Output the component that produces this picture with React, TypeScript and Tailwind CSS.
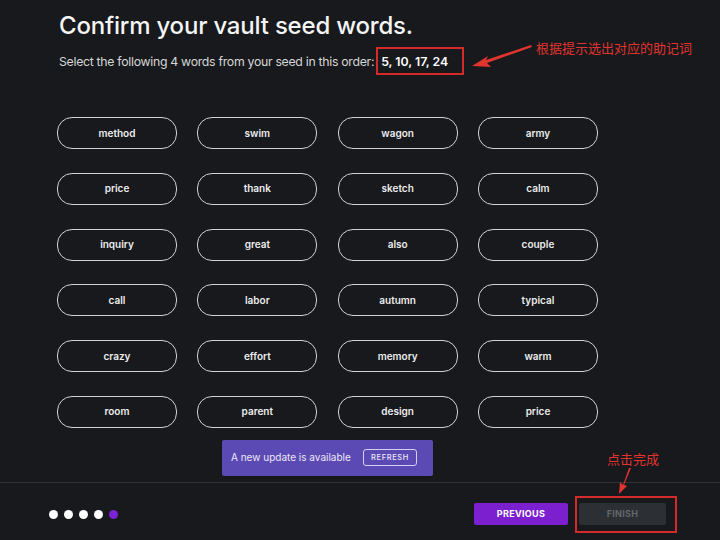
const words = [
  'method', 'swim', 'wagon', 'army',
  'price', 'thank', 'sketch', 'calm',
  'inquiry', 'great', 'also', 'couple',
  'call', 'labor', 'autumn', 'typical',
  'crazy', 'effort', 'memory', 'warm',
  'room', 'parent', 'design', 'price',
];

export default function App() {
  return (
    <div className="relative h-[540px] w-[720px] overflow-hidden bg-[#17191c] font-['Inter',sans-serif] text-white">
      {/* Main */}
      <div className="h-[482px] pl-[57px] pt-[10px]">
        <h1 className="pl-[2px] text-[24px] font-medium leading-[32px] tracking-[-0.2px] text-[#f4f4f4]">
          Confirm your vault seed words.
        </h1>
        <p className="mt-[6px] flex items-center pl-[2px] text-[12.3px] leading-[28px] text-[#d6d6d6] tracking-[-0.3px]">
          Select the following 4 words from your seed in this order:
          <span className="ml-[7px] font-semibold text-white tracking-[0px]">5, 10, 17, 24</span>
        </p>

        <div className="mt-[41px] grid w-[541px] grid-cols-4 gap-x-[20.3px] gap-y-[23.8px]">
          {words.map((w, i) => (
            <div
              key={i}
              className="flex h-[32px] w-[120px] items-center justify-center rounded-[15px] border-[1.5px] border-[#d2d2d2] text-[10px] font-semibold text-[#ececec]"
            >
              {w}
            </div>
          ))}
        </div>

        <div className="mt-[12px] flex w-[541px] justify-center">
          <div className="flex h-[36px] w-[211px] items-center justify-between rounded-[2px] bg-[#5b4ab3] pl-[9px] pr-[16px] shadow">
            <span className="text-[10px] text-[#ebe8f7]">A new update is available</span>
            <span className="flex h-[17px] w-[54px] items-center justify-center rounded-[3px] border border-[#d6d0f0] text-[7.5px] font-medium tracking-[0.6px] text-[#ebe8f7]">
              REFRESH
            </span>
          </div>
        </div>
      </div>

      {/* Footer */}
      <div className="flex h-[58px] items-start justify-between border-t border-[#303235] pl-[49px] pr-[54px] pt-[20px]">
        <div className="mt-[7px] flex gap-[6px]">
          <span className="h-[9px] w-[9px] rounded-full bg-white" />
          <span className="h-[9px] w-[9px] rounded-full bg-white" />
          <span className="h-[9px] w-[9px] rounded-full bg-white" />
          <span className="h-[9px] w-[9px] rounded-full bg-white" />
          <span className="h-[9px] w-[9px] rounded-full bg-[#7b22d4]" />
        </div>
        <div className="flex gap-[11px]">
          <button className="flex h-[22px] w-[94px] items-center justify-center rounded-[2px] bg-[#7b1fcf] text-[9px] font-bold tracking-[0.3px] text-white">
            PREVIOUS
          </button>
          <button className="flex h-[22px] w-[87px] items-center justify-center rounded-[2px] bg-[#2c2f33] text-[9px] font-bold tracking-[0.3px] text-[#63666b]">
            FINISH
          </button>
        </div>
      </div>

      {/* Annotations */}
      <div className="absolute left-[376px] top-[47px] h-[28px] w-[88px] border-2 border-[#d42a2a]" />
      <div className="absolute left-[575px] top-[496px] h-[37px] w-[102px] border-2 border-[#d42a2a]" />
      <span className="absolute left-[536px] top-[39px] font-['Noto_Sans_CJK_SC',sans-serif] text-[13px] leading-[18px] text-[#e0342f]">
        根据提示选出对应的助记词
      </span>
      <span className="absolute left-[607px] top-[450px] font-['Noto_Sans_CJK_SC',sans-serif] text-[13px] leading-[18px] text-[#e0342f]">
        点击完成
      </span>
      <svg className="pointer-events-none absolute left-0 top-0" width="720" height="540">
        <path d="M531 45 L486 60 L488 56 L472 66 L491 67 L487 63 L532 47 Z" fill="#e0342f" />
        <path d="M629 468 L623 485 L620 482 L619 494 L627 486 L624 485 L631 468 Z" fill="#e0342f" />
      </svg>
    </div>
  );
}
